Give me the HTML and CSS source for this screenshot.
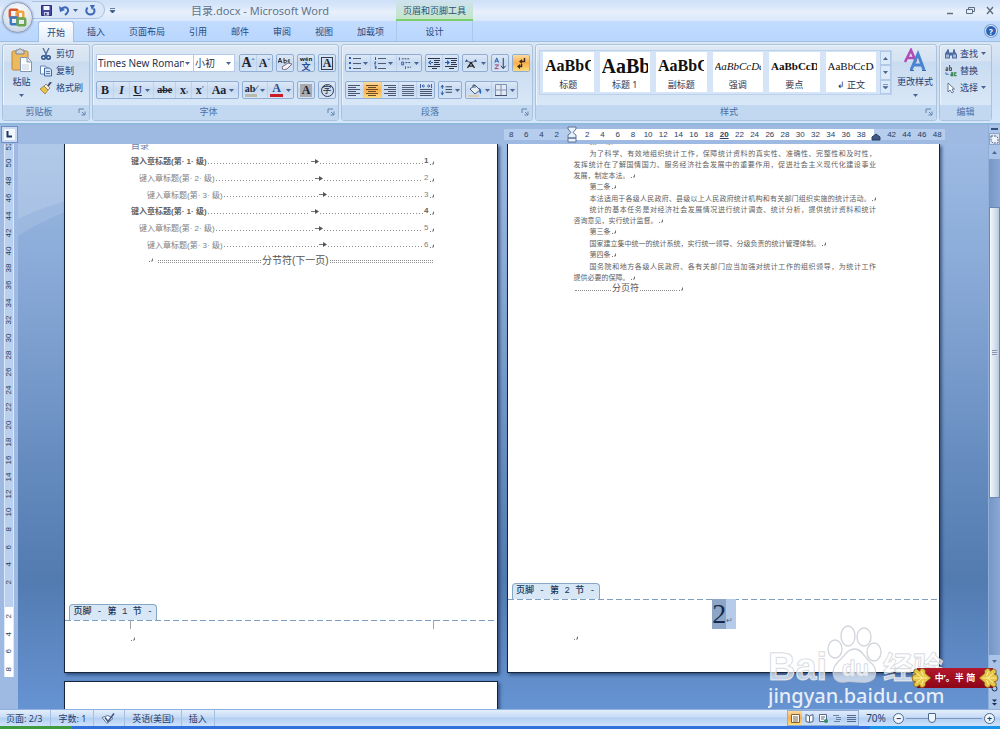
FILE: index.html
```html
<!DOCTYPE html>
<html lang="zh-CN">
<head>
<meta charset="utf-8">
<title>目录.docx - Microsoft Word</title>
<link rel="stylesheet" href="styles.css">
</head>
<body>
<svg class="defs" aria-hidden="true">
  <defs>
    <symbol id="down" viewBox="0 0 5 3"><path d="M0 0h5L2.500 3z" fill="#4a6590"/></symbol>
    <symbol id="launch" viewBox="0 0 8 8"><path d="M1 5V1h5M4 4l3 3M7 3.500V7H3.500" fill="none" stroke="#6483ad"/></symbol>
    <symbol id="left" viewBox="0 0 12 12"><path d="M0 1.500h12M0 3.500h8M0 5.500h12M0 7.500h8M0 9.500h12M0 11.500h8" stroke="#4a556e"/></symbol>
    <symbol id="center" viewBox="0 0 12 12"><path d="M0 1.500h12M2 3.500h8M0 5.500h12M2 7.500h8M0 9.500h12M2 11.500h8" stroke="#6a4a28"/></symbol>
    <symbol id="right" viewBox="0 0 12 12"><path d="M0 1.500h12M4 3.500h8M0 5.500h12M4 7.500h8M0 9.500h12M4 11.500h8" stroke="#4a556e"/></symbol>
    <symbol id="full" viewBox="0 0 12 12"><path d="M0 1.500h12M0 3.500h12M0 5.500h12M0 7.500h12M0 9.500h12M0 11.500h12" stroke="#566178"/></symbol>
    <symbol id="dist" viewBox="0 0 12 12"><path d="M.5 0v4M11.500 0v4M2 2h3M7 2h3M2 2l1.500-1.500M2 2l1.500 1.500M10 2L8.500.5M10 2L8.500 3.500" stroke="#3b64a8" fill="none"/><path d="M0 5.500h12M0 7.500h12M0 9.500h12M0 11.500h12" stroke="#4a556e"/></symbol>
    <symbol id="bullets" viewBox="0 0 12 12"><path d="M0 0h2v2H0zM0 5h2v2H0zM0 10h2v2H0z" fill="#2e5ba8"/><path d="M4 1.500h8M4 6.500h8M4 11.500h8" stroke="#4d5a74"/></symbol>
    <symbol id="numbers" viewBox="0 0 12 12"><path d="M1.500 0v3M.5 5h1.500L.5 7H2M.5 9H2v1.500H1 2V12H.5" stroke="#2e5ba8" fill="none"/><path d="M4 1.500h8M4 6.500h8M4 11.500h8" stroke="#4d5a74"/></symbol>
    <symbol id="multi" viewBox="0 0 15 13"><path d="M1.500 0v3M4 5h2v3H4zM8 9.500v3" stroke="#2e5ba8" fill="none"/><path d="M4 1.500h8M8 5.500h6M10 10.500h4" stroke="#33425e" stroke-dasharray="2 1"/></symbol>
    <symbol id="outdent" viewBox="0 0 12 12"><path d="M0 1.500h12M6 3.500h6M6 5.500h5M6 7.500h6M0 9.500h12M4 11.500h5" stroke="#2c3549"/><path d="M3 3L0 5.500 3 8zM2 5h3v1H2z" fill="#2e5ba8"/></symbol>
    <symbol id="indent" viewBox="0 0 12 12"><path d="M0 1.500h12M6 3.500h6M6 5.500h5M6 7.500h6M0 9.500h12M4 11.500h5" stroke="#2c3549"/><path d="M2 3l3 2.500L2 8zM0 5h3v1H0z" fill="#2e5ba8"/></symbol>
    <symbol id="asian" viewBox="0 0 16 12"><path d="M4 11l4-6 4 6M6 9h4" stroke="#222" stroke-width="1.500" fill="none"/><path d="M1 4l2-3 2 3zM11 4l2-3 2 3z" fill="#26427c"/><path d="M5 4l3 1 3-1" stroke="#222" fill="none"/></symbol>
    <symbol id="sort" viewBox="0 0 13 14"><path d="M1 6l2-5 2 5M1.500 4.500h3" stroke="#2558a6" fill="none"/><path d="M1 8.500h4l-4 4h4" stroke="#9f385f" fill="none"/><path d="M10 1v11M7.500 9.500L10 12.500l2.500-3" stroke="#232d44" fill="none"/></symbol>
    <symbol id="marks" viewBox="0 0 12 12"><path d="M9.500 1v3.500H6" stroke="#3d2b20" stroke-width="1.500" fill="none"/><path d="M7 2L4 4.500 7 7zM5 7L2 9.500 5 12z" fill="#3d2b20"/><path d="M6.500 7v2.500H4" stroke="#3d2b20" stroke-width="1.500" fill="none"/></symbol>
    <symbol id="spacing" viewBox="0 0 13 12"><path d="M2.500 0l2 3h-4zM2.500 12l2-3h-4zM2 3h1v2H2zM2 7h1v2H2z" fill="#2d61b1"/><path d="M6 2.500h7M6 5.500h7M6 8.500h7" stroke="#33425e"/></symbol>
    <symbol id="bucket" viewBox="0 0 14 13"><path d="M2 5l5-4 5 5-5 4z" fill="#e9edf4" stroke="#486080"/><path d="M5 4V1h2v3" fill="none" stroke="#486080"/><path d="M11 4q3 1 2 6-2-1-2-4z" fill="#2768bd"/><path d="M0 11h11v2H0z" fill="#d8cdb0"/></symbol>
    <symbol id="border" viewBox="0 0 12 12"><path d="M.5.5h11v11H.5zM6 0v12M0 6h12" fill="#e1e9f4" stroke="#8292ac"/><path d="M0 11.500h12" stroke="#43516b"/></symbol>
    <symbol id="clear" viewBox="0 0 14 13"><path d="M0 6l2-5 2 5M1 4.500h2M6 1v5M6 3.500q3-1 2.500 1T6 6M12 3q-2-1-2 1t2 1" fill="none" stroke="#333"/><path d="M4 10l6-4 4 1-5 5-4 1z" fill="#f6f1f4" stroke="#75708c"/></symbol>
    <symbol id="scissors" viewBox="0 0 10 12"><path d="M2 0l4 8M8 0L4 8" stroke="#516c98" stroke-width="1.300"/><circle cx="2.500" cy="9.500" r="1.800" fill="none" stroke="#274f8d" stroke-width="1.400"/><circle cx="7.500" cy="9.500" r="1.800" fill="none" stroke="#274f8d" stroke-width="1.400"/></symbol>
    <symbol id="copy" viewBox="0 0 12 11"><path d="M.5.5h5l2 2v6h-7z" fill="#f7faff" stroke="#6484b2"/><path d="M4.500 2.500h5l2 2v6h-7z" fill="#d5e3f7" stroke="#43689f"/><path d="M6 6h4M6 8h4" stroke="#5b7eb5"/></symbol>
    <symbol id="brush" viewBox="0 0 12 12"><path d="M0 7l4-3 4 4-3 4-2-2z" fill="#e8c34c" stroke="#937328" stroke-width=".7"/><path d="M4 4l2-2 4 4-2 2z" fill="#f5efd8" stroke="#6f6a63" stroke-width=".7"/><path d="M8 4l3-4" stroke="#4c4f73" stroke-width="2"/></symbol>
    <symbol id="paste" viewBox="0 0 22 25"><rect x="1" y="3" width="16" height="19" rx="1.500" fill="#edb95d" stroke="#ba8740"/><path d="M5 2h2q2-3 4 0h2v4H5z" fill="#cfd3d9" stroke="#7f858d"/><path d="M9.500 9.500h7l4 4v10h-11z" fill="#fafcff" stroke="#8595ae"/><path d="M16 10v4h4" fill="#dce5f3" stroke="#8595ae"/><path d="M11 17h7M11 19h7M11 21h7" stroke="#c6d2e3"/></symbol>
    <symbol id="save" viewBox="0 0 11 11"><path d="M.5.5h10v10H.5z" fill="#4447a0" stroke="#2c2e78"/><path d="M2.500 1h6v4h-6z" fill="#f5f7ff"/><path d="M3 7h5v3.500H3z" fill="#c9cde8"/><path d="M4 8h1.500v2H4z" fill="#34377d"/></symbol>
    <symbol id="undo" viewBox="0 0 11 11"><path d="M2 4q4-3 6-1 3 3-2 7" fill="none" stroke="#3d68b8" stroke-width="2"/><path d="M0 1l1 6 5-2z" fill="#3d68b8"/></symbol>
    <symbol id="redo" viewBox="0 0 11 11"><path d="M2.500 2.500Q0 6 2.500 8.500q3 2 6 0 2-3 0-5" fill="none" stroke="#3d68b8" stroke-width="2"/><path d="M5 0h5L7 5z" fill="#3d68b8"/></symbol>
    <symbol id="styles" viewBox="0 0 24 24"><path d="M2 14L8 2l5 12M4 10h7" fill="none" stroke="#b14bb5" stroke-width="2.500"/><path d="M8 22l7-16 6 16M10 17h9" fill="none" stroke="#4a83cf" stroke-width="3"/><path d="M7 22.500h4M19 22.500h4" stroke="#3568af"/></symbol>
    <symbol id="find" viewBox="0 0 12 11"><path d="M2 1h2v2l1 2v5H0V5l2-3zM8 1h2v2l2 3v4H7V5l1-2zM5 4h2v3H5z" fill="#4c6a9f"/><path d="M1 6h3v3H1zM8 6h3v3H8z" fill="#9bb7de"/></symbol>
    <symbol id="replace" viewBox="0 0 13 13"><path d="M1 3h2v3H1V4.500h2M5 0v6M5 3h2v3H5" fill="none" stroke="#444"/><path d="M6.500 8.500h2v3h-2V10h2M12.500 8.500h-2v3h2" fill="none" stroke="#338048" stroke-width="1.200"/><path d="M1 8v2h3" fill="none" stroke="#2f5db0"/></symbol>
    <symbol id="cursor" viewBox="0 0 8 12"><path d="M1 1v9l2-2 2 3 1.500-1L5 7h2.500z" fill="#fff" stroke="#566b8c" stroke-width=".9"/></symbol>
    <symbol id="para" viewBox="0 0 4 4"><path d="M3.500.5v2.500H2" fill="none" stroke="#777"/><path d="M0 3h1v1H0z" fill="#777"/></symbol>
    <symbol id="arrow" viewBox="0 0 8 6"><path d="M0 3.500h6" stroke="#777"/><path d="M4 1l4 2.500L4 6z" fill="#555"/></symbol>
    <symbol id="floral" viewBox="0 0 22 22"><path d="M21 11Q17 8 15 6q1-4-3-5-3 0-3 3Q6 0 3 3q-1 3 2 4-4 0-4 4t4 4q-3 1-2 4 3 3 6-1 0 3 3 3 4-1 3-5 2-2 6-5z" fill="#e6c447" stroke="#765813" stroke-width=".8"/><path d="M6 6l6 5-6 5M3 11h14M11 4l2 5M11 18l2-5" fill="none" stroke="#fff5a6"/></symbol>
  </defs>
</svg>
<div class="app">
  <header class="head">
    <button class="office" aria-label="Office 按钮"><svg viewBox="0 0 30 30"><g fill="none" stroke-width="2.500"><rect x="7" y="7" width="8" height="8" rx="1" stroke="#d6582f"/><rect x="14" y="9" width="7" height="7" rx="1" stroke="#efa53c"/><rect x="8" y="15" width="7" height="7" rx="1" stroke="#3c78bd"/><rect x="15" y="16" width="8" height="7" rx="1" stroke="#69a650"/></g></svg></button>
    <div class="titlebar">
      <div class="qat">
        <button aria-label="保存"><svg class="i11"><use href="#save"/></svg></button>
        <button aria-label="撤消"><svg class="i11"><use href="#undo"/></svg><svg class="dd"><use href="#down"/></svg></button>
        <button aria-label="恢复"><svg class="i11"><use href="#redo"/></svg></button>
      </div>
      <button class="more" aria-label="自定义快速访问工具栏"><svg class="i7" viewBox="0 0 7 7"><path d="M1 1.500h5M1 3.500h5L3.500 6z" fill="#334f80" stroke="#334f80" stroke-width=".7"/></svg></button>
      <h1 class="title">目录.docx - Microsoft Word</h1>
      <span class="context">页眉和页脚工具</span>
      <div class="winbtns">
        <button aria-label="最小化"><svg class="i9" viewBox="0 0 9 9"><path d="M1 7.500h6" stroke="#5f6d80" stroke-width="1.500"/></svg></button>
        <button aria-label="还原"><svg class="i9" viewBox="0 0 9 9"><path d="M2.500 3V1.500h6v4H7M.5 3.500h6v4h-6z" fill="none" stroke="#5f6d80"/></svg></button>
        <button aria-label="关闭"><svg class="i9" viewBox="0 0 9 9"><path d="M1 1l6 7M7 1L1 8" stroke="#5f6d80" stroke-width="1.400"/></svg></button>
      </div>
    </div>
    <nav class="tabs">
      <button class="tab on">开始</button><button class="tab">插入</button><button class="tab">页面布局</button><button class="tab">引用</button><button class="tab">邮件</button><button class="tab">审阅</button><button class="tab">视图</button><button class="tab">加载项</button><button class="tab ctx">设计</button>
      <button class="help" aria-label="帮助">?</button>
    </nav>
  </header>

  <section class="ribbon">
    <div class="group clip">
      <div class="gbody">
        <button class="big"><svg class="paste"><use href="#paste"/></svg>粘贴<svg class="dd"><use href="#down"/></svg></button>
        <div class="stack">
          <button><svg class="i12"><use href="#scissors"/></svg>剪切</button>
          <button><svg class="i12"><use href="#copy"/></svg>复制</button>
          <button><svg class="i12"><use href="#brush"/></svg>格式刷</button>
        </div>
      </div>
      <div class="glabel">剪贴板<svg class="launch"><use href="#launch"/></svg></div>
    </div>

    <div class="group font">
      <div class="gbody rows">
        <div class="row">
          <div class="combo">
            <span class="pick face"><select aria-label="字体"><option>Times New Roman</option></select><svg class="dd"><use href="#down"/></svg></span>
            <span class="pick size"><select aria-label="字号"><option>小初</option></select><svg class="dd"><use href="#down"/></svg></span>
          </div>
          <div class="set"><button class="serif s14" aria-label="增大字体">A<sup>ˆ</sup></button><button class="serif" aria-label="缩小字体">A<sup>ˇ</sup></button></div>
          <div class="set"><button aria-label="清除格式"><svg class="i14"><use href="#clear"/></svg></button></div>
          <div class="set"><button class="pinyin" aria-label="拼音指南"><i>wén</i><span>文</span></button></div>
          <div class="set"><button class="serif" aria-label="字符边框"><span class="boxed">A</span></button></div>
        </div>
        <div class="row">
          <div class="set wide">
            <button class="serif">B</button><button class="serif ital">I</button><button class="serif"><u>U</u><svg class="dd"><use href="#down"/></svg></button><button class="serif s10"><s>abe</s></button><button class="serif">x<sub>,</sub></button><button class="serif">x<sup>'</sup></button><button class="serif">Aa<svg class="dd"><use href="#down"/></svg></button>
          </div>
          <div class="set tint"><button class="serif s10 hl" aria-label="突出显示"><span>ab∕</span><svg class="dd"><use href="#down"/></svg></button><button class="serif fc" aria-label="字体颜色"><span>A</span><svg class="dd"><use href="#down"/></svg></button></div>
          <div class="set"><button class="serif shade" aria-label="字符底纹"><span>A</span></button></div>
          <div class="set"><button aria-label="带圈字符"><span class="ring">字</span></button></div>
        </div>
      </div>
      <div class="glabel">字体<svg class="launch"><use href="#launch"/></svg></div>
    </div>

    <div class="group para">
      <div class="gbody rows">
        <div class="row">
          <div class="set three">
            <button aria-label="项目符号"><svg class="i12"><use href="#bullets"/></svg><svg class="dd"><use href="#down"/></svg></button>
            <button aria-label="编号"><svg class="i12"><use href="#numbers"/></svg><svg class="dd"><use href="#down"/></svg></button>
            <button aria-label="多级列表"><svg class="i14"><use href="#multi"/></svg><svg class="dd"><use href="#down"/></svg></button>
          </div>
          <div class="set"><button aria-label="减少缩进量"><svg class="i12"><use href="#outdent"/></svg></button><button aria-label="增加缩进量"><svg class="i12"><use href="#indent"/></svg></button></div>
          <div class="set"><button aria-label="中文版式"><svg class="i14"><use href="#asian"/></svg><svg class="dd"><use href="#down"/></svg></button></div>
          <div class="set"><button aria-label="排序"><svg class="i14"><use href="#sort"/></svg></button></div>
          <div class="set"><button class="hot" aria-label="显示编辑标记"><svg class="i12"><use href="#marks"/></svg></button></div>
        </div>
        <div class="row">
          <div class="set five">
            <button aria-label="左对齐"><svg class="i12"><use href="#left"/></svg></button><button class="hot" aria-label="居中"><svg class="i12"><use href="#center"/></svg></button><button aria-label="右对齐"><svg class="i12"><use href="#right"/></svg></button><button aria-label="两端对齐"><svg class="i12"><use href="#full"/></svg></button><button aria-label="分散对齐"><svg class="i12"><use href="#dist"/></svg></button>
          </div>
          <div class="set"><button aria-label="行距"><svg class="i12"><use href="#spacing"/></svg><svg class="dd"><use href="#down"/></svg></button></div>
          <div class="set tint"><button aria-label="底纹"><svg class="i14"><use href="#bucket"/></svg><svg class="dd"><use href="#down"/></svg></button><button aria-label="边框"><svg class="i12"><use href="#border"/></svg><svg class="dd"><use href="#down"/></svg></button></div>
        </div>
      </div>
      <div class="glabel">段落<svg class="launch"><use href="#launch"/></svg></div>
    </div>

    <div class="group styles">
      <div class="gbody">
        <div class="gallery">
          <button class="style"><b class="p16">AaBbCc</b><span>标题</span></button>
          <button class="style"><b class="p20">AaBb</b><span>标题 1</span></button>
          <button class="style"><b class="p16">AaBbCc</b><span>副标题</span></button>
          <button class="style"><em class="p11">AaBbCcDd</em><span>强调</span></button>
          <button class="style"><b class="p11">AaBbCcD</b><span>要点</span></button>
          <button class="style"><i class="p11 plain">AaBbCcDd</i><span>↲ 正文</span></button>
          <div class="roll">
            <button aria-label="上一行"><svg class="dd flip"><use href="#down"/></svg></button>
            <button aria-label="下一行"><svg class="dd"><use href="#down"/></svg></button>
            <button aria-label="其他"><svg class="i7" viewBox="0 0 7 7"><path d="M1 1.500h5M1 3.500h5L3.500 6z" fill="#4a6590" stroke="#4a6590" stroke-width=".6"/></svg></button>
          </div>
        </div>
        <button class="big change"><svg class="i24"><use href="#styles"/></svg>更改样式<svg class="dd"><use href="#down"/></svg></button>
      </div>
      <div class="glabel">样式<svg class="launch"><use href="#launch"/></svg></div>
    </div>

    <div class="group edit">
      <div class="gbody">
        <div class="stack">
          <button><svg class="i12"><use href="#find"/></svg>查找<svg class="dd"><use href="#down"/></svg></button>
          <button><svg class="i12"><use href="#replace"/></svg>替换</button>
          <button><svg class="i12"><use href="#cursor"/></svg>选择<svg class="dd"><use href="#down"/></svg></button>
        </div>
      </div>
      <div class="glabel">编辑</div>
    </div>
  </section>

  <main class="work">
    <div class="corner"><button aria-label="制表符"><svg class="i9" viewBox="0 0 9 9"><path d="M2.500 1v5.500H7" fill="none" stroke="#1d3764" stroke-width="2"/></svg></button></div>
    <div class="hruler">
      <div class="hstrip">
        <span>8</span><span>6</span><span>4</span><span>2</span><span><svg class="hour" viewBox="0 0 10 17"><path d="M1 1h8v2L6 6.500 9 9v3H1V9l3-2.500L1 3zM1 12h8v4H1z" fill="#e8f0fb" stroke="#5c7296"/></svg></span><span>2</span><span>4</span><span>6</span><span>8</span><span>10</span><span>12</span><span>14</span><span>16</span><span>18</span><span class="stop">20</span><span>22</span><span>24</span><span>26</span><span>28</span><span>30</span><span>32</span><span>34</span><span>36</span><span>38</span><span><svg class="rind" viewBox="0 0 10 8"><path d="M1 7V4l4-3 4 3v3z" fill="#3f5680" stroke="#263c62"/></svg></span><span>42</span><span>44</span><span>46</span><span>48</span>
      </div>
    </div>
    <div class="vruler">
      <div class="vstrip">
        <span>52</span><span>50</span><span>48</span><span>46</span><span>44</span><span>42</span><span>40</span><span>38</span><span>36</span><span>34</span><span>32</span><span>30</span><span>28</span><span>26</span><span>24</span><span>22</span><span>20</span><span>18</span><span>16</span><span>14</span><span>12</span><span>10</span><span>8</span><span>6</span><span>4</span><span>2</span><span></span><span>2</span><span>4</span><span>6</span><span>8</span>
      </div>
    </div>
    <div class="canvas">
      <svg class="swoosh" viewBox="0 0 47 100" aria-hidden="true"><path d="M0 0h47v57Q20 65 0 75z" fill="#fff" fill-opacity=".13"/><path d="M0 0h47v68Q20 79 0 92z" fill="#fff" fill-opacity=".1"/></svg>
      <article class="page">
        <div class="body toc">
          <div class="cut"><span>目录</span></div>
          <div class="entry l1">键入章标题(第· 1· 级)<i></i><svg class="ar"><use href="#arrow"/></svg><i></i>1<svg class="pm"><use href="#para"/></svg></div>
          <div class="entry l2">键入章标题(第· 2· 级)<i></i><svg class="ar"><use href="#arrow"/></svg><i></i>2<svg class="pm"><use href="#para"/></svg></div>
          <div class="entry l3">键入章标题(第· 3· 级)<i></i><svg class="ar"><use href="#arrow"/></svg><i></i>3<svg class="pm"><use href="#para"/></svg></div>
          <div class="entry l1">键入章标题(第· 1· 级)<i></i><svg class="ar"><use href="#arrow"/></svg><i></i>4<svg class="pm"><use href="#para"/></svg></div>
          <div class="entry l2">键入章标题(第· 2· 级)<i></i><svg class="ar"><use href="#arrow"/></svg><i></i>5<svg class="pm"><use href="#para"/></svg></div>
          <div class="entry l3">键入章标题(第· 3· 级)<i></i><svg class="ar"><use href="#arrow"/></svg><i></i>6<svg class="pm"><use href="#para"/></svg></div>
          <div class="break section"><svg class="pm"><use href="#para"/></svg><i></i><span>分节符(下一页)</span><i></i></div>
        </div>
        <div class="tag">页脚 - 第 1 节 -</div>
        <footer class="foot f1"><div class="ticks"><b></b><b></b></div><svg class="pm"><use href="#para"/></svg></footer>
      </article>
      <article class="page">
        <div class="body law">
          <div class="cut small"><span>第一条</span></div>
          <p><span class="ln first">为了科学、有效地组织统计工作，保障统计资料的真实性、准确性、完整性和及时性，</span><span class="ln">发挥统计在了解国情国力、服务经济社会发展中的重要作用，促进社会主义现代化建设事业</span><span>发展，制定本法。<svg class="pm"><use href="#para"/></svg></span></p>
          <p class="art">第二条<svg class="pm"><use href="#para"/></svg></p>
          <p><span class="ln first">本法适用于各级人民政府、县级以上人民政府统计机构和有关部门组织实施的统计活动。<svg class="pm"><use href="#para"/></svg></span></p>
          <p><span class="ln first">统计的基本任务是对经济社会发展情况进行统计调查、统计分析，提供统计资料和统计</span><span>咨询意见，实行统计监督。<svg class="pm"><use href="#para"/></svg></span></p>
          <p class="art">第三条<svg class="pm"><use href="#para"/></svg></p>
          <p><span class="first">国家建立集中统一的统计系统，实行统一领导、分级负责的统计管理体制。<svg class="pm"><use href="#para"/></svg></span></p>
          <p class="art">第四条<svg class="pm"><use href="#para"/></svg></p>
          <p><span class="ln first">国务院和地方各级人民政府、各有关部门应当加强对统计工作的组织领导，为统计工作</span><span>提供必要的保障。<svg class="pm"><use href="#para"/></svg></span></p>
          <div class="break pagebreak"><i></i><span>分页符</span><i></i><svg class="pm"><use href="#para"/></svg></div>
        </div>
        <div class="tag">页脚 - 第 2 节 -</div>
        <footer class="foot f2"><div class="num"><span>2</span><em>↵</em></div><svg class="pm"><use href="#para"/></svg></footer>
      </article>
      <article class="page next"></article>
    </div>
    <div class="vscroll">
      <div class="split"></div>
      <button class="rul" aria-label="标尺"><svg class="i9" viewBox="0 0 9 9"><path d="M1 1h5l2 2v5H3L1 6z" fill="#eef3fb" stroke="#4c5f80" stroke-dasharray="2 1"/></svg></button>
      <button class="up" aria-label="向上滚动"><svg class="dd flip"><use href="#down"/></svg></button>
      <div class="track"><div class="thumb"></div></div>
      <button class="dn" aria-label="向下滚动"><svg class="dd"><use href="#down"/></svg></button>
      <button class="br" aria-label="上一页"><svg class="i7" viewBox="0 0 7 7"><path d="M1 3h5L3.500 .5zM1 6.500h5L3.500 4z" fill="#182c4e"/></svg></button>
      <button class="br" aria-label="选择浏览对象"><svg class="i7" viewBox="0 0 7 7"><circle cx="3.500" cy="3.500" r="2.500" fill="none" stroke="#182c4e"/></svg></button>
      <button class="br" aria-label="下一页"><svg class="i7" viewBox="0 0 7 7"><path d="M1 .5h5L3.500 3zM1 4h5L3.500 6.500z" fill="#182c4e"/></svg></button>
    </div>
  </main>

  <footer class="status">
    <span>页面: 2/3</span><span>字数: 1</span><span class="chk"><svg class="i14" viewBox="0 0 14 12"><path d="M1 5l6-2 5 3-6 5z" fill="#f6f8fc" stroke="#62779a"/><path d="M4 5l3 4 6-8" fill="none" stroke="#3b5589" stroke-width="1.500"/></svg></span><span>英语(美国)</span><span>插入</span>
    <div class="views">
      <button class="hot" aria-label="页面视图"><svg class="i9" viewBox="0 0 9 9"><path d="M.5.5h8v8h-8zM2 3h5M2 5h5M2 7h5" fill="#fff" stroke="#816335"/></svg></button>
      <button aria-label="阅读版式"><svg class="i9" viewBox="0 0 9 9"><path d="M4.500 2L1 .5v7l3.500 1L8 7.500v-7zM4.500 2v6" fill="#fff" stroke="#4b5f80"/></svg></button>
      <button aria-label="Web 版式"><svg class="i9" viewBox="0 0 9 9"><path d="M.5.5h7v7h-7zM2 3h4M2 5h3" fill="#fff" stroke="#55688a"/><circle cx="7" cy="7" r="2" fill="#348965"/></svg></button>
      <button aria-label="大纲视图"><svg class="i9" viewBox="0 0 9 9"><path d="M0 1.500h6M3 3.500h5M3 5.500h5M1 7.500h6" stroke="#6c80a2"/></svg></button>
      <button aria-label="普通视图"><svg class="i9" viewBox="0 0 9 9"><path d="M0 1.500h9M0 3.500h9M0 5.500h9M0 7.500h9" stroke="#566a8d"/></svg></button>
    </div>
    <button class="pct">70%</button>
    <button class="zb" aria-label="缩小">−</button>
    <input class="zoom" type="range" min="0" max="100" value="32" aria-label="显示比例">
    <button class="zb" aria-label="放大">+</button>
  </footer>
  <div class="taskbar"><i></i><b></b></div>

  <div class="mark" aria-hidden="true">
    <svg viewBox="0 0 180 88">
      <g fill="#fff" fill-opacity=".6" stroke="#c9cdd5" stroke-opacity=".85" stroke-width="1.300">
        <ellipse cx="67" cy="26" rx="7" ry="9"/><ellipse cx="80" cy="13" rx="7" ry="10"/><ellipse cx="96" cy="14" rx="7" ry="9"/><ellipse cx="106" cy="29" rx="7" ry="9"/>
        <path d="M87 26c7 0 9 8 15 13 8 6 8 19-4 20-7 1-15-2-22 0-12 1-14-12-6-20 6-5 9-13 17-13z"/>
      </g>
      <g font-family="Liberation Sans, sans-serif" font-weight="bold" fill="#fff" fill-opacity=".65" stroke="#c9cdd5" stroke-width="1" paint-order="stroke">
        <text x="0" y="57" font-size="38">Bai</text><text x="74" y="53" font-size="22">du</text>
        <text x="115" y="55" font-size="30" font-family="Noto Sans CJK SC, sans-serif">经验</text>
      </g>
      <text x="0" y="80" font-size="20" font-family="Noto Sans, sans-serif" font-weight="500" fill="#fff" fill-opacity=".85">jingyan.baidu.com</text>
    </svg>
  </div>
  <div class="ime"><svg class="orn"><use href="#floral"/></svg><span>中’。半 简</span><svg class="orn flipx"><use href="#floral"/></svg></div>
</div>
</body>
</html>
```
FILE: styles.css
```css
* { box-sizing: border-box; }
body { margin: 0; font-family: "Noto Sans", "Noto Sans CJK SC", sans-serif; font-size: 9px; color: #1f4178; }
button { border: 0; background: none; padding: 0; margin: 0; font: inherit; color: inherit; display: flex; align-items: center; justify-content: center; white-space: nowrap; }
.defs { position: absolute; width: 0; height: 0; }
svg { display: block; flex: none; }
.i7 { width: 7px; height: 7px; }
.i9 { width: 9px; height: 9px; }
.i11 { width: 11px; height: 11px; }
.i12 { width: 12px; height: 12px; }
.i14 { width: 14px; height: 13px; }
.i24 { width: 24px; height: 24px; }
.dd { width: 5px; height: 3px; margin-left: 3px; }
.flip { transform: rotate(180deg); }
.flipx { transform: scaleX(-1); }

.app { position: relative; height: 100vh; display: flex; flex-direction: column; overflow: hidden; background: #bfdbff; }

.head { position: relative; flex: none; }
.office { position: absolute; left: 2px; top: 2px; width: 31px; height: 31px; border-radius: 50%; border: 1px solid #8a9bb8; background: radial-gradient(circle at 50% 30%, #fff, #dfe6f0 55%, #b9c6da); box-shadow: 0 0 2px #7489ab; z-index: 2; }
.office svg { width: 29px; height: 29px; }
.titlebar { height: 21px; display: flex; align-items: stretch; background: linear-gradient(#cfe0f8 0, #d4e4fa 4px, #d6e5fa 5px, #e8f0fb 12px, #d9e8fb 21px); }
.qat { margin: 1px 0 2px 32px; width: 73px; padding-left: 9px; display: flex; align-items: center; gap: 7px; border: 1px solid #a9c2e4; border-left: 0; border-radius: 0 10px 10px 0; background: #d9e7f9; }
.more { width: 14px; }
.title { margin: 0; flex: 0 0 277px; padding-left: 72px; font-size: 11px; line-height: 22px; font-weight: 400; color: #60748f; white-space: nowrap; }
.context { flex: 0 0 77px; padding-top: 4px; line-height: 13px; text-align: center; background: linear-gradient(#cfe2f0, #c4e5c7); border-bottom: 2px solid #79ce6e; color: #28517b; white-space: nowrap; }
.winbtns { margin-left: auto; display: flex; gap: 11px; padding-right: 5px; }
.tabs { display: flex; height: 21px; padding-left: 38px; background: linear-gradient(#c3dcff, #b9d6fd); border-bottom: 1px solid #a0bde2; }
.tab { padding: 0 12px; color: #24487e; }
.tab.on { height: 21px; padding: 0 8px; margin-right: 1px; border: 1px solid #9fbfe8; border-bottom: 0; border-radius: 3px 3px 0 0; background: linear-gradient(#fff, #e1ecf9); }
.tab.ctx { width: 77px; border: 1px solid #a9c9e8; border-width: 0 1px; }
.help { margin: 4px 3px 4px auto; width: 12px; height: 12px; border-radius: 50%; background: #2b62b9; border: 1px solid #e4efff; color: #fff; font-size: 8px; font-weight: 700; box-shadow: 0 0 0 1px #7fa0cf; }

.ribbon { flex: none; display: flex; gap: 2px; height: 83px; padding: 2px 8px 2px 2px; background: linear-gradient(#dbe6f4, #c9dcf1 30px, #d3e6fb); border-bottom: 2px solid #8fb9dc; }
.group { display: flex; flex-direction: column; border: 1px solid #a9c3df; border-radius: 3px; overflow: hidden; background: linear-gradient(#dfe9f5 0, #d5e2f1 16px, #c9dbf0 17px, #d9e8f8 62px); box-shadow: inset 1px 1px 0 #ecf3fb; }
.gbody { flex: 1; display: flex; }
.glabel { position: relative; height: 15px; line-height: 14px; text-align: center; background: #c1d8f0; color: #4a70a7; padding-right: 14px; }
.edit .glabel { padding-right: 0; }
.launch { position: absolute; right: 3px; top: 3px; width: 8px; height: 8px; }
.clip { flex: 0 0 88px; }
.font { flex: 0 0 247px; }
.para { flex: 0 0 192px; }
.styles { flex: 1 1 400px; }
.edit { flex: 0 0 53px; }
.big { flex-direction: column; width: 37px; justify-content: flex-start; padding-top: 3px; line-height: 14px; }
.big .dd { margin: 5px 0 0; }
.paste { width: 22px; height: 25px; margin-bottom: 2px; }
.change { width: 42px; }
.change .i24 { margin-bottom: 3px; }
.stack { display: flex; flex-direction: column; }
.stack button { height: 17px; gap: 4px; justify-content: flex-start; }
.stack .dd { margin-left: 0; }
.edit .stack { padding-left: 5px; }
.edit .stack button { gap: 3px; }
.rows { flex-direction: column; padding: 9px 2px 0 3px; gap: 9px; }
.row { display: flex; gap: 3px; height: 18px; }
.combo { display: flex; width: 140px; background: #fff; border: 1px solid #b3cbe8; margin-right: 1px; }
.pick { display: flex; align-items: center; }
.pick select { appearance: none; flex: 1; min-width: 0; width: 100%; border: 0; background: none; padding: 0 0 0 1px; font: inherit; font-size: 10px; color: #2a3350; }
.pick .dd { margin: 0 3px 0 1px; }
.face { flex: 0 0 97px; border-right: 1px solid #b3cbe8; }
.size { flex: 1; }
.set { display: flex; border: 1px solid #92add3; border-radius: 2px; background: linear-gradient(#dce8f6, #c7daf1 50%, #d5e4f6); }
.set button { min-width: 16px; padding: 0 1px; }
.set button + button { border-left: 1px solid #bdd1eb; }
.wide { width: 144px; }
.wide button { flex: 1 1 auto; }
.tint { width: 53px; }
.tint button { flex: 1; }
.three { width: 77px; }
.three button { flex: 1; }
.three .dd { margin-left: 2px; }
.five { width: 90px; }
.five button { flex: 1; }
.serif { font-family: "Liberation Serif", serif; font-size: 12px; font-weight: 700; color: #1c2230; line-height: 14px; }
.s14 { font-size: 14px; }
.s10 { font-size: 10px; }
.ital { font-style: italic; }
sup, sub { font-size: 8px; line-height: 6px; color: #2e5ba8; }
.pinyin { flex-direction: column; color: #294f99; font-weight: 700; }
.pinyin i { font-size: 6px; line-height: 6px; font-style: normal; color: #222; }
.pinyin span { font-size: 9px; line-height: 9px; }
.boxed { border: 1px solid #333c50; line-height: 11px; padding: 0 1px; }
.hl span { border-bottom: 3px solid #b9b9ae; line-height: 10px; }
.fc span { border-bottom: 3px solid #cb1b24; line-height: 11px; padding: 0 2px; color: #274d8c; }
.shade span { background: #a9abb0; line-height: 13px; padding: 0 2px; }
.ring { border: 1px solid #333c50; border-radius: 50%; width: 13px; height: 13px; line-height: 10px; color: #222b40; }
.hot { background: linear-gradient(#fbdba2, #f9ae4c 50%, #fddd7e); }

.gallery { display: flex; flex: 1; gap: 6px; margin: 5px 2px 8px 3px; padding: 1px 0 2px 3px; background: #d5e4f6; border: 1px solid #bcd2ec; height: 45px; }
.style { flex: 1 1 50px; min-width: 0; overflow: hidden; background: #fff; flex-direction: column; color: #2a3350; }
.style b, .style em, .style i { align-self: flex-start; margin-left: 2px; height: 24px; line-height: 24px; width: 46px; overflow: hidden; text-align: left; font-family: "Liberation Serif", serif; color: #101010; }
.style span { line-height: 13px; }
.p16 { font-size: 16px; }
.p20 { font-size: 20px; }
.p11 { font-size: 11px; }
.style .plain { font-style: normal; }
.roll { display: flex; flex-direction: column; width: 11px; margin: -1px 0 -2px -2px; }
.roll button { flex: 1; border: 1px solid #b1c9e7; background: #dce9f8; }
.roll .dd { margin: 0; }

.work { flex: 1; min-height: 0; display: grid; grid-template: 19px 1fr / 18px 1fr 12px; background: #9ebae2; }
.corner { padding: 1px 0 0 1px; }
.corner button { width: 17px; height: 17px; border: 1px solid #6d8fc4; box-shadow: inset 0 0 0 2px #c9daf2; background: #f2f7fd; }
.hruler { display: grid; grid-template-columns: 1fr 1fr; gap: 9px; padding: 4px 48px 0 46px; }
.hstrip { grid-column: 2; margin: 0 -5px 0 -3px; height: 11px; display: flex; background: linear-gradient(90deg, #b6cdee 15%, #fff 15%, #fff 84%, #b6cdee 84%); }
.hstrip span { flex: 1 1 0; min-width: 0; display: flex; justify-content: center; font-family: "Liberation Sans", sans-serif; font-size: 8px; line-height: 11px; color: #2a3d60; }
.hour { width: 10px; height: 17px; margin-top: -3px; }
.rind { width: 10px; height: 8px; margin-top: 4px; }
.hstrip .stop { text-decoration: underline; font-weight: 700; }
.vruler { grid-row: 2; overflow: hidden; padding: 0 4px 25px; }
.vstrip { height: 100%; margin-top: -7px; display: flex; flex-direction: column; background: linear-gradient(#b9d0ef 87%, #fff 87%); border: 1px solid #dce9fa; border-width: 0 1px; }
.vstrip span { flex: 1 1 0; min-height: 0; writing-mode: vertical-rl; transform: rotate(180deg); text-align: center; line-height: 8px; font-family: "Liberation Sans", sans-serif; font-size: 8px; color: #2a3d60; }

.canvas { position: relative; overflow: hidden; display: grid; grid-template: 1fr 28px / 1fr 1fr; gap: 8px 9px; padding: 0 48px 0 46px; background: linear-gradient(#9dbbe4 0, #87a8d6 25%, #668cbf 56%, #527bb0 77%, #6693d2 100%); }
.swoosh { position: absolute; left: 0; top: 0; width: 47px; height: 100px; }
.page { position: relative; display: flex; flex-direction: column; min-height: 0; min-width: 0; background: #fff; border: 1px solid #18243a; border-top: 0; box-shadow: 2px 2px 3px rgba(20, 40, 80, .6); }
.page.next { border-top: 1px solid #18243a; border-bottom: 0; }
.body { flex: 1; min-height: 0; padding: 0 63px 0 66px; font-family: "Liberation Sans", "Noto Sans CJK SC", sans-serif; font-size: 8px; color: #606060; }
.cut { height: 8px; overflow: hidden; display: flex; align-items: flex-end; line-height: 12px; font-size: 9px; color: #6b82a3; }
.cut.small { height: 4px; font-size: 8px; color: #777; padding-left: 16px; }
.entry { display: flex; align-items: center; height: 17px; white-space: nowrap; }
.entry i { flex: 1; height: 1px; margin: 5px 1px 0; background: repeating-linear-gradient(90deg, #8d8d8d 0 1px, transparent 1px 3px); }
.l1 { font-weight: 700; }
.l2 { padding-left: 8px; color: #808080; }
.l3 { padding-left: 16px; height: 16px; color: #808080; }
.ar { width: 8px; height: 6px; }
.pm { width: 4px; height: 4px; margin-left: 1px; display: inline-block; }
.entry .pm { margin-top: 4px; }
.break { display: flex; align-items: center; color: #555; white-space: nowrap; }
.break i { flex: 1; height: 3px; border: 1px dotted #8e8e8e; border-width: 1px 0; margin: 4px 1px 0; }
.section { height: 15px; font-size: 10px; padding-left: 17px; }
.section i:first-of-type { margin-left: 5px; }
.law { font-size: 7px; line-height: 11px; color: #606060; }
.law p { margin: 0; }
.law p > span { display: block; white-space: nowrap; }
.law .ln { text-align: justify; text-align-last: justify; }
.law .first { padding-left: 16px; }
.law .art { line-height: 12px; padding-left: 16px; }
.law .pagebreak { width: 109px; font-size: 9px; }
.pagebreak i { height: 1px; border-width: 1px 0 0; }
.tag { align-self: flex-start; margin-left: 4px; height: 16px; line-height: 15px; border: 1px solid #86a8c6; border-bottom: 0; border-radius: 4px 4px 0 0; background: #d7e7f5; color: #17365c; font-family: "Liberation Mono", "Noto Sans CJK SC", monospace; font-weight: 500; white-space: nowrap; width: 88px; text-align: center; }
.foot { flex: none; padding: 0 63px 0 65px; background: repeating-linear-gradient(90deg, #7f9fbe 0 6px, transparent 6px 9px) top / 100% 1px no-repeat; }
.f1 { height: 52px; }
.f2 { height: 73px; }
.ticks { display: flex; justify-content: space-between; height: 11px; }
.ticks b { width: 1px; height: 9px; background: #a5a5a5; }
.num { display: flex; width: 24px; height: 30px; margin: 0 auto 1px; background: #b6cbea; align-items: center; }
.num span { width: 14px; background: #8da5c6; font: 28px/30px "Liberation Serif", serif; color: #15294b; }
.num em { font-size: 8px; font-style: normal; padding-top: 10px; color: #566b8e; }

.vscroll { grid-row: 1 / 3; grid-column: 3; display: flex; flex-direction: column; align-items: stretch; background: #a9c4e8; border-left: 1px solid #8fafd9; }
.split { height: 2px; margin: 3px 2px; background: #35527f; }
.rul { height: 12px; background: #d8e3f2; border: 1px solid #8ea5c8; }
.up { height: 14px; }
.up .dd, .dn .dd { margin: 0; }
.track { flex: 1; padding-top: 48px; background: linear-gradient(90deg, #7796c5, #89a8d5); }
.thumb { height: 65%; border: 1px solid #6f87b0; background: repeating-linear-gradient(#8796ad 0 1px, #dde5f0 1px 2px) center / 5px 6px no-repeat, linear-gradient(90deg, #f5f8fd, #d3ddec 60%, #b8c7de); }
.dn { height: 12px; }
.br { height: 14px; }

.status { flex: none; height: 17px; display: flex; align-items: stretch; background: linear-gradient(#e3eefb, #c7dcf6 45%, #b2cff2 50%, #cfe2fa); border-top: 1px solid #8eb1df; color: #1f3d6c; }
.status > span { padding: 0 7px; line-height: 15px; border-right: 1px solid #a3bfe2; display: flex; align-items: center; font-size: 9px; white-space: nowrap; }
.status > span:first-child { padding: 0 8px 0 6px; }
.status > .chk { padding: 0 9px 0 7px; }
.views { margin-left: auto; display: flex; border: 1px solid #92add3; }
.views button { width: 14px; }
.pct { width: 34px; font-size: 10px; }
.zb { align-self: center; width: 11px; height: 11px; border: 1px solid #4b6790; border-radius: 50%; background: #f1f6fd; line-height: 9px; font-weight: 700; }
.zoom { appearance: none; width: 76px; margin: 0 2px; background: linear-gradient(#7d98bf, #7d98bf) center / 100% 1px no-repeat; }
.zoom::-webkit-slider-thumb { appearance: none; width: 8px; height: 10px; background: #eef4fc; border: 1px solid #4b6790; border-radius: 1px 1px 4px 4px; }
.status .zb:last-child { margin-right: 5px; }
.taskbar { flex: none; height: 3px; display: flex; justify-content: space-between; background: #2f70dc; }
.taskbar i { width: 72px; background: #3f9b3f; }
.taskbar b { width: 130px; background: #1895ea; }

.mark { position: absolute; right: 52px; bottom: 18px; width: 180px; height: 88px; pointer-events: none; }
.mark svg { width: 180px; height: 88px; }
.ime { position: absolute; right: 1px; bottom: 40px; width: 88px; height: 23px; display: flex; align-items: center; justify-content: space-between; background: linear-gradient(#b3182b, #8d0618) center / 76px 20px no-repeat; color: #fff; font-weight: 700; white-space: nowrap; }
.orn { width: 21px; height: 22px; }
```
